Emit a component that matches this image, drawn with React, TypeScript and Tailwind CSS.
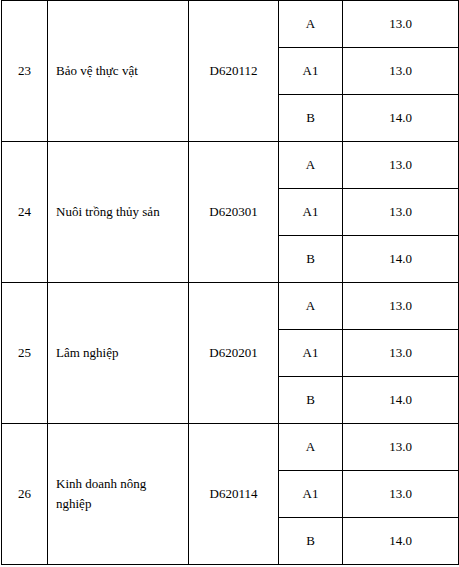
const majors = [
  { no: '23', name: 'Bảo vệ thực vật', code: 'D620112' },
  { no: '24', name: 'Nuôi trồng thủy sản', code: 'D620301' },
  { no: '25', name: 'Lâm nghiệp', code: 'D620201' },
  { no: '26', name: 'Kinh doanh nông nghiệp', code: 'D620114' },
]

const blocks = [
  { block: 'A', score: '13.0' },
  { block: 'A1', score: '13.0' },
  { block: 'B', score: '14.0' },
]

export default function App() {
  return (
    <div className="min-h-[567px] w-[459px] bg-white font-['Liberation_Serif','Times_New_Roman',serif]">
      <table className="ml-px w-[457px] table-fixed border-collapse text-[13px] leading-5 text-black">
        <colgroup>
          <col className="w-[46px]" />
          <col className="w-[141px]" />
          <col className="w-[90px]" />
          <col className="w-[64px]" />
          <col className="w-[116px]" />
        </colgroup>
        <tbody>
          {majors.map((m) =>
            blocks.map((b, i) => (
              <tr key={m.no + b.block} className="h-[47px]">
                {i === 0 && (
                  <>
                    <td rowSpan={3} className="border border-black p-0 text-center align-middle">
                      {m.no}
                    </td>
                    <td rowSpan={3} className="border border-black py-0 pl-2 pr-4 text-left align-middle">
                      {m.name}
                    </td>
                    <td rowSpan={3} className="border border-black p-0 text-center align-middle">
                      {m.code}
                    </td>
                  </>
                )}
                <td className="border border-black p-0 text-center align-middle">{b.block}</td>
                <td className="border border-black p-0 text-center align-middle">{b.score}</td>
              </tr>
            ))
          )}
        </tbody>
      </table>
    </div>
  )
}
